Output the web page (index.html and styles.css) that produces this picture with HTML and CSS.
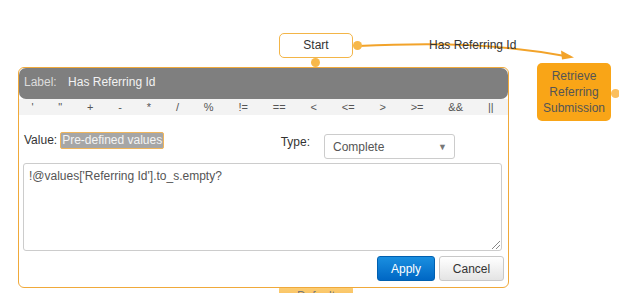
FILE: index.html
```html
<!DOCTYPE html>
<html lang="en">

<head>
    <meta charset="UTF-8">
    <meta name="viewport" content="width=device-width, initial-scale=1.0">
    <title>Workflow Editor</title>
    <link rel="stylesheet" href="styles.css">
</head>

<body>
    <div class="canvas">
        <svg class="edges" width="619" height="293" viewBox="0 0 619 293">
            <path d="M358 46 C 440 42, 500 44, 571 57" fill="none" stroke="#f2a32a" stroke-width="2" />
            <polygon points="574,57.5 561,50.5 562,59.5" fill="#f2a32a" />
        </svg>
        <div class="edge-label">Has Referring Id</div>

        <div class="node node-start">Start</div>
        <span class="port port-start-right"></span>
        <span class="port port-start-bottom"></span>

        <div class="node node-task">Retrieve<br>Referring<br>Submission</div>
        <span class="port port-task-right"></span>

        <div class="node node-default">Default</div>

        <div class="dialog">
            <div class="dialog-header">
                <span class="header-label">Label:</span>
                <span class="header-value">Has Referring Id</span>
            </div>
            <div class="operators">
                <span>'</span>
                <span>"</span>
                <span>+</span>
                <span>-</span>
                <span>*</span>
                <span>/</span>
                <span>%</span>
                <span>!=</span>
                <span>==</span>
                <span>&lt;</span>
                <span>&lt;=</span>
                <span>&gt;</span>
                <span>&gt;=</span>
                <span>&amp;&amp;</span>
                <span>||</span>
            </div>

            <div class="value-row">
                <span class="value-label">Value:</span>
                <span class="predefined">Pre-defined values</span>
                <div class="type-field">
                    <span class="type-label">Type:</span>
                    <div class="select">
                        <span>Complete</span>
                        <span class="caret">&#9660;</span>
                    </div>
                </div>
            </div>

            <div class="expression">
                <span>!@values['Referring Id'].to_s.empty?</span>
                <svg class="grip" width="9" height="9" viewBox="0 0 9 9">
                    <path d="M1 9 L9 1 M5 9 L9 5" stroke="#888" stroke-width="1" />
                </svg>
            </div>

            <div class="actions">
                <button class="btn btn-apply">Apply</button>
                <button class="btn btn-cancel">Cancel</button>
            </div>
        </div>
    </div>
</body>

</html>
```

FILE: styles.css
```css
body {
    margin: 0;
    background-color: #ffffff;
    font-family: "Liberation Sans", Arial, sans-serif;
    font-size: 12px;
    color: #333;
}

.canvas {
    position: relative;
    width: 619px;
    height: 293px;
    overflow: hidden;
}

.edges {
    position: absolute;
    left: 0;
    top: 0;
}

.edge-label {
    position: absolute;
    left: 429px;
    top: 37px;
    color: #333;
    line-height: 16px;
}

.node {
    position: absolute;
    box-sizing: border-box;
    width: 74px;
    border-radius: 5px;
    font-size: 12px;
    text-align: center;
}

.node-start {
    left: 279px;
    top: 33px;
    height: 25px;
    line-height: 23px;
    background-color: #fff;
    border: 1px solid #f3b548;
    color: #333;
}

.node-task {
    left: 537px;
    top: 63px;
    height: 58px;
    padding-top: 5px;
    line-height: 16px;
    background-color: #f9a517;
    color: #555;
}

.node-default {
    left: 279px;
    top: 284px;
    height: 25px;
    line-height: 25px;
    background: linear-gradient(#fcd07a, #f7b548);
    color: #777;
}

.port {
    position: absolute;
    width: 9px;
    height: 9px;
    border-radius: 50%;
    background-color: #f7b84a;
}

.port-start-right {
    left: 353px;
    top: 41px;
}

.port-start-bottom {
    left: 311px;
    top: 58px;
}

.port-task-right {
    left: 611px;
    top: 89px;
    background-color: #fbbf5e;
}

.dialog {
    position: absolute;
    left: 18px;
    top: 67px;
    width: 489px;
    padding-bottom: 6px;
    background-color: #fff;
    border: 1px solid #f0a93a;
    border-radius: 6px;
    z-index: 2;
}

.dialog-header {
    height: 31px;
    line-height: 29px;
    padding-left: 5px;
    background-color: #7f7f7f;
    border-radius: 7px;
}

.header-label {
    color: #dcdcdc;
    margin-right: 8px;
}

.header-value {
    color: #f2f2f2;
}

.operators {
    display: flex;
    height: 16px;
    padding: 0 2px 0 0;
    line-height: 16px;
    background-color: #f3f3f3;
    font-size: 11px;
    color: #555;
}

.operators span {
    flex: 1 1 auto;
    text-align: center;
}

.value-row {
    display: flex;
    align-items: flex-start;
    padding: 17px 0 0 5px;
}

.value-label {
    margin-top: 1px;
    margin-right: 3px;
    line-height: 14px;
}

.predefined {
    padding: 0 1px;
    line-height: 15px;
    background-color: #a6a6a6;
    border: 1px solid #f0b55a;
    border-radius: 2px;
    color: #f4f4f4;
}

.type-field {
    display: flex;
    align-items: flex-start;
    margin-left: auto;
    margin-right: 53px;
}

.type-label {
    margin-top: 3px;
    margin-right: 14px;
    line-height: 14px;
}

.select {
    display: flex;
    justify-content: space-between;
    align-items: center;
    box-sizing: border-box;
    width: 131px;
    height: 25px;
    margin-top: 2px;
    padding: 0 7px 0 8px;
    border: 1px solid #ccc;
    border-radius: 3px;
    color: #555;
}

.caret {
    font-size: 9px;
    color: #777;
}

.expression {
    position: relative;
    box-sizing: border-box;
    height: 88px;
    margin: 4px 6px 0 4px;
    padding: 5px 5px;
    line-height: 14px;
    border: 1px solid #ccc;
    border-radius: 3px;
    color: #555;
}

.grip {
    position: absolute;
    right: 1px;
    bottom: 1px;
}

.actions {
    display: flex;
    justify-content: flex-end;
    gap: 4px;
    margin: 5px 4px 0 0;
}

.btn {
    height: 25px;
    font-family: "Liberation Sans", Arial, sans-serif;
    font-size: 12px;
    border-radius: 3px;
}

.btn-apply {
    width: 58px;
    background: linear-gradient(#1a8fe0, #0067c4);
    border: 1px solid #0060b0;
    color: #fff;
}

.btn-cancel {
    width: 65px;
    background: linear-gradient(#ffffff, #e4e4e4);
    border: 1px solid #c8c8c8;
    color: #333;
}
```
